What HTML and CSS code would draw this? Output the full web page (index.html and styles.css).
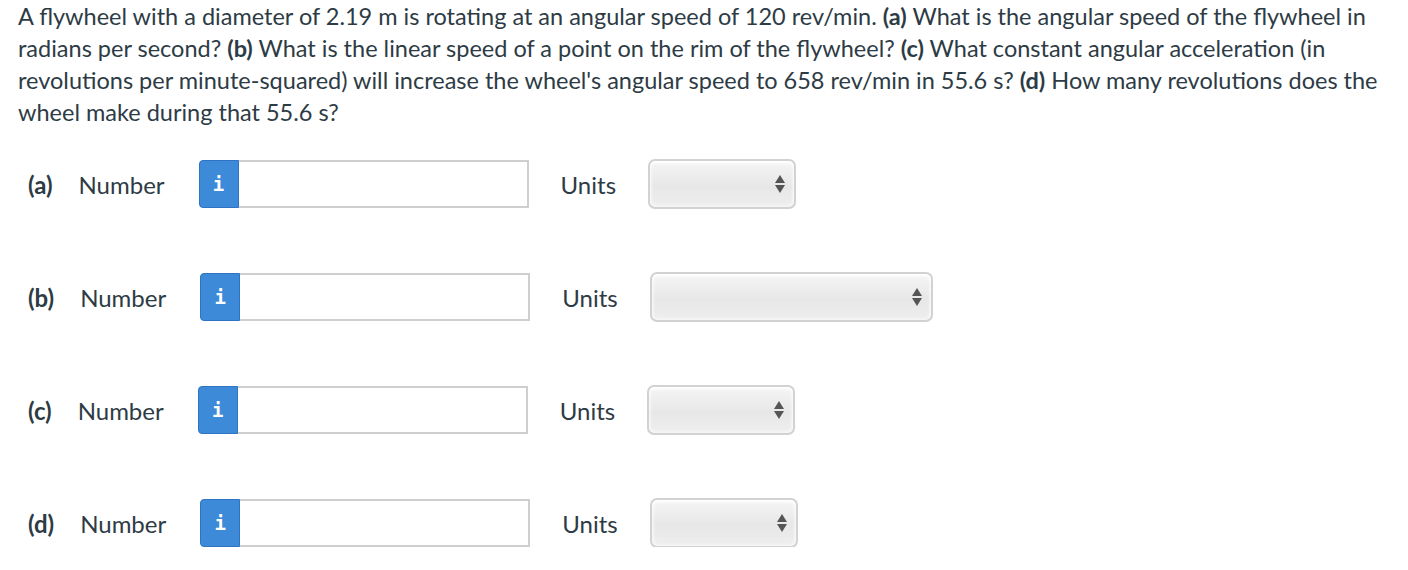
FILE: index.html
```html
<!DOCTYPE html>
<html>
<head>
<meta charset="utf-8">
<link rel="stylesheet" href="styles.css">
</head>
<body>
<div class="page">
  <p class="question">A flywheel with a diameter of 2.19 m is rotating at an angular speed of 120 rev/min. <b>(a)</b> What is the angular speed of the flywheel in radians per second? <b>(b)</b> What is the linear speed of a point on the rim of the flywheel? <b>(c)</b> What constant angular acceleration (in revolutions per minute-squared) will increase the wheel's angular speed to 658 rev/min in 55.6 s? <b>(d)</b> How many revolutions does the wheel make during that 55.6 s?</p>

  <div class="answers">
    <div class="row">
      <span class="part">(a)</span>
      <span class="lbl">Number</span>
      <div class="field"><span class="info">i</span><input class="num" type="text"></div>
      <span class="units">Units</span>
      <div class="select"><svg class="arrows" width="10" height="18" viewBox="0 0 10 18"><path d="M5 0 L10 8 L0 8 Z M0 10 L10 10 L5 18 Z" fill="#555"/></svg></div>
    </div>
    <div class="row">
      <span class="part">(b)</span>
      <span class="lbl">Number</span>
      <div class="field"><span class="info">i</span><input class="num" type="text"></div>
      <span class="units">Units</span>
      <div class="select wide"><svg class="arrows" width="10" height="18" viewBox="0 0 10 18"><path d="M5 0 L10 8 L0 8 Z M0 10 L10 10 L5 18 Z" fill="#555"/></svg></div>
    </div>
    <div class="row">
      <span class="part">(c)</span>
      <span class="lbl">Number</span>
      <div class="field"><span class="info">i</span><input class="num" type="text"></div>
      <span class="units">Units</span>
      <div class="select"><svg class="arrows" width="10" height="18" viewBox="0 0 10 18"><path d="M5 0 L10 8 L0 8 Z M0 10 L10 10 L5 18 Z" fill="#555"/></svg></div>
    </div>
    <div class="row">
      <span class="part">(d)</span>
      <span class="lbl">Number</span>
      <div class="field"><span class="info">i</span><input class="num" type="text"></div>
      <span class="units">Units</span>
      <div class="select"><svg class="arrows" width="10" height="18" viewBox="0 0 10 18"><path d="M5 0 L10 8 L0 8 Z M0 10 L10 10 L5 18 Z" fill="#555"/></svg></div>
    </div>
  </div>
</div>
</body>
</html>
```

FILE: styles.css
```css
html, body {
  margin: 0;
  padding: 0;
  background: #fff;
}
body {
  font-family: Lato, "Open Sans", sans-serif;
  font-size: 24px;
  color: #2d3b45;
}
.page {
  padding: 0 18px;
}
.question {
  margin: 0;
  font-size: 23.5px;
  line-height: 32px;
}
.question b {
  font-weight: 700;
}
.answers {
  margin-top: 32px;
  padding-left: 10px;
  display: flex;
  flex-direction: column;
  gap: 65px;
}
.row {
  display: flex;
  align-items: center;
  height: 48px;
}
.part {
  font-weight: 700;
}
.lbl {
  margin-left: 26px;
}
.field {
  margin-left: 34px;
  display: flex;
  height: 48px;
}
.info {
  width: 40px;
  box-sizing: border-box;
  background: #3d8ad9;
  border: 1px solid #2f74c2;
  border-radius: 4px 0 0 4px;
  color: #fff;
  font-family: "DejaVu Sans Mono", "Liberation Mono", monospace;
  font-weight: 700;
  font-size: 19px;
  display: flex;
  align-items: center;
  justify-content: center;
}
.num {
  width: 290px;
  height: 48px;
  box-sizing: border-box;
  border: 2px solid #cfcfcf;
  border-left: none;
  margin: 0;
  padding: 0 8px;
  font-family: inherit;
  font-size: 20px;
  outline: none;
}
.units {
  margin-left: 32px;
}
.select {
  margin-left: 32px;
  width: 148px;
  height: 50px;
  box-sizing: border-box;
  border: 2px solid #d2d2d2;
  border-radius: 7px;
  background: linear-gradient(#f5f5f5, #e7e7e7 55%, #eeeeee);
  box-shadow: inset 0 2px 3px #fff, inset 0 0 5px rgba(255,255,255,0.95);
  display: flex;
  align-items: center;
  justify-content: flex-end;
  padding-right: 9px;
}
.select.wide {
  width: 283px;
}
.arrows {
  display: block;
}
```
